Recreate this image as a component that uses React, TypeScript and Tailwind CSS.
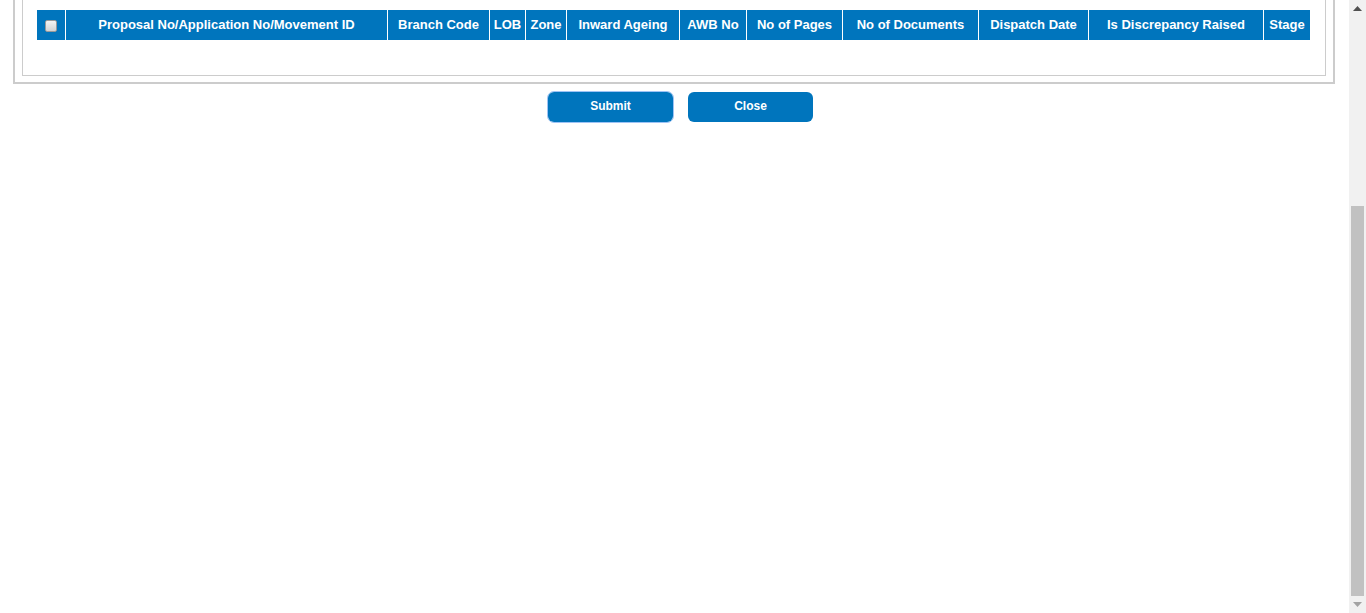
import React from "react";

const columns: { label: string; w: string }[] = [
  { label: "Proposal No/Application No/Movement ID", w: "w-[322px]" },
  { label: "Branch Code", w: "w-[102px]" },
  { label: "LOB", w: "w-[36px]" },
  { label: "Zone", w: "w-[41px]" },
  { label: "Inward Ageing", w: "w-[113px]" },
  { label: "AWB No", w: "w-[67px]" },
  { label: "No of Pages", w: "w-[96px]" },
  { label: "No of Documents", w: "w-[136px]" },
  { label: "Dispatch Date", w: "w-[110px]" },
  { label: "Is Discrepancy Raised", w: "w-[175px]" },
  { label: "Stage", w: "w-[47px]" },
];

const Scrollbar = () => (
  <div className="w-[17px] h-full bg-[#f1f1f1] flex flex-col items-center shrink-0">
    <div className="h-[17px] w-full flex items-center justify-center">
      <svg width="9" height="5" viewBox="0 0 9 5">
        <path d="M0 5 L4.5 0 L9 5 Z" fill="#505050" />
      </svg>
    </div>
    <div className="flex-1 w-full flex flex-col justify-end px-[2px]">
      <div className="h-[390px] w-full bg-[#c1c1c1]" />
    </div>
    <div className="h-[17px] w-full flex items-center justify-center">
      <svg width="9" height="5" viewBox="0 0 9 5">
        <path d="M0 0 L9 0 L4.5 5 Z" fill="#a3a3a3" />
      </svg>
    </div>
  </div>
);

const App = () => {
  return (
    <div className="flex w-[1366px] h-[613px] bg-white overflow-hidden font-['Liberation_Sans',Arial,sans-serif]">
      <div className="flex-1">
        <div className="ml-[13px] w-[1322px] border-2 border-t-0 border-[#cccccc] pl-[7px] pb-[6px]">
          <div className="w-[1304px] border border-t-0 border-[#cccccc] pt-[10px] pl-[14px] pb-[35px]">
            <div className="flex h-[30px] bg-[#0075bd] text-white text-[13px] font-bold w-[1273px]">
              <div className="w-[28px] flex items-center justify-center pt-[2px]">
                <div className="w-[12px] h-[12px] rounded-[2px] border border-[#9a9a9a] bg-gradient-to-b from-[#f4f4f4] to-[#d4d4d4]" />
              </div>
              {columns.map((c) => (
                <div
                  key={c.label}
                  className={`${c.w} border-l border-white flex items-center justify-center whitespace-nowrap`}
                >
                  {c.label}
                </div>
              ))}
            </div>
          </div>
        </div>
        <div className="flex pl-[547px] pt-[7px] gap-[14px]">
          <div className="border border-[#9ec3f5] rounded-[7px]">
            <button className="w-[125px] h-[30px] pb-[2px] rounded-[6px] bg-[#0075bd] text-white text-[12px] font-bold">
              Submit
            </button>
          </div>
          <div className="pt-[1px]">
            <button className="w-[125px] h-[30px] pb-[2px] rounded-[6px] bg-[#0075bd] text-white text-[12px] font-bold">
              Close
            </button>
          </div>
        </div>
      </div>
      <Scrollbar />
    </div>
  );
};

export default App;
